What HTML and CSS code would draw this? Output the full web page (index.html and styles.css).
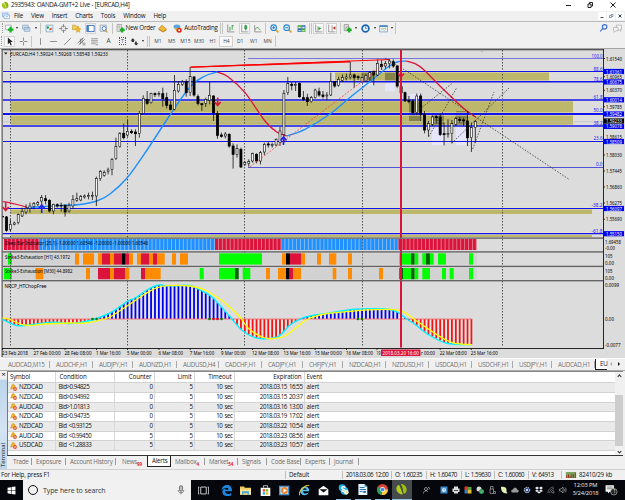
FILE: index.html
```html
<!DOCTYPE html>
<html lang="en">
<head>
    <meta charset="UTF-8">
    <title>2935943: OANDA-GMT+2 Live - [EURCAD,H4]</title>
    <link rel="stylesheet" href="styles.css">
</head>
<body>
    <header class="titlebar">
        <svg class="logo" viewBox="0 0 16 16"><path d="M2 5C4 1 6 2 7 5l4 9C5 16 1 11 2 5z" fill="#a8c71a"/><path d="M6 1c7-2 11 5 8 11l-2 2C9 12 10 6 6 1z" fill="#8fb80f"/></svg>
        <span class="title">2935943: OANDA-GMT+2 Live - [EURCAD,H4]</span>
        <svg class="winctl" viewBox="0 0 60 10" fill="none" stroke="#222"><path d="M5 5.500h5M49.500 2.500l5 5M54.500 2.500l-5 5"/><path d="M27 4h3v3.500h-3zM28.500 4V2.500h3V6H30"/></svg>
    </header>
    <nav class="menubar">
        <svg class="mdi-icon" viewBox="0 0 16 16"><path d="M1 2h11v7H1z" fill="#d6e9fa" stroke="#4a90d0"/><path d="M4 6h11v7H4z" fill="#fff" stroke="#4a90d0"/><path d="M6 11l2-2 2 1 3-3" fill="none" stroke="#4a90d0"/></svg>
        <span>File</span><span>View</span><span>Insert</span><span>Charts</span><span>Tools</span><span>Window</span><span>Help</span>
        <div class="mdi-buttons">
            <svg viewBox="0 0 8 8"><path d="M2.500 5.500h3" stroke="#456" fill="none"/></svg>
            <svg viewBox="0 0 8 8"><path d="M2.500 3.500h2v2h-2zM4 3V2.500h2v2H5" stroke="#678" stroke-width=".7" fill="none"/></svg>
            <svg viewBox="0 0 8 8"><path d="M2.500 2.500l3 3M5.500 2.500l-3 3" stroke="#345" fill="none"/></svg>
        </div>
    </nav>

    <div class="toolbar main-tools">
        <i class="grip"></i>
        <svg viewBox="0 0 16 16"><path d="M1 2h10v8H1z" fill="#fff" stroke="#789"/><path d="M10 5v10M5 10h10" stroke="#16b022" stroke-width="4"/></svg>
        <b class="caret"></b>
        <svg viewBox="0 0 16 16"><path d="M1 2h10v7H1zM4 6h10v7H4z" fill="#cfe2f3" stroke="#6f93b5"/></svg>
        <b class="caret"></b>
        <i class="sep"></i>
        <svg viewBox="0 0 16 16"><path d="M2 2h12v12H2z" fill="#e9f6ff" stroke="#58a"/><path d="M5 4v5M3 6h4" stroke="#1a3" stroke-width="2"/><path d="M8 10l4-2" stroke="#d42" stroke-width="3"/></svg>
        <svg viewBox="0 0 16 16" fill="none" stroke="#555"><circle cx="8" cy="8" r="4.500"/><path d="M8 0v6M8 10v6M0 8h6M10 8h6"/></svg>
        <svg viewBox="0 0 16 16"><path d="M1 2h5l1 2h4v6H1z" fill="#f5cf57" stroke="#b88f20"/><path d="M11 5l1.500 3 3.500.500-2.500 2.500.600 4-3.100-2-3.100 2 .600-4L6 8.500 9.500 8z" fill="#f7bd2b" stroke="#b88f20" stroke-width=".7"/></svg>
        <svg viewBox="0 0 16 16" class="pressed"><path d="M1.500 2.500h13v11h-13z" fill="#fff" stroke="#1f5fae" stroke-width="1.500"/><path d="M2 3h3v10H2z" fill="#2d72c4"/></svg>
        <svg viewBox="0 0 16 16"><path d="M2 2h11v11H2z" fill="#dce9f5" stroke="#789"/><circle cx="9" cy="8" r="3.500" fill="#fff" stroke="#47a" stroke-width="1.500"/><path d="M11 11l4 4" stroke="#d9a62c" stroke-width="2.500"/></svg>
        <i class="sep"></i>
        <svg viewBox="0 0 16 16"><path d="M2 1h8v12H2z" fill="#eee" stroke="#777"/><path d="M4 4h4M4 7h4" stroke="#777"/><path d="M11 6v9M6.500 10.500h9" stroke="#16b022" stroke-width="4"/></svg>
        <span class="label">New Order</span>
        <svg viewBox="0 0 16 16"><path d="M7 2l8 7-6 5-8-5z" fill="#f0b93a" stroke="#a97613"/><path d="M1 9l8 5 6-5v2l-6 4-8-5z" fill="#b37c14"/></svg>
        <svg viewBox="0 0 16 16"><ellipse cx="7" cy="5" rx="6" ry="4" fill="#57a5dc"/><path d="M2 7l5 7 6-7z" fill="#e5b24a"/><circle cx="11" cy="11" r="4.500" fill="#e02a1c"/><path d="M9.500 9.500h3v3h-3z" fill="#fff"/></svg>
        <span class="label">AutoTrading</span>
        <i class="sep double"></i>
        <svg viewBox="0 0 16 16" fill="none" stroke="#555"><path d="M3 1v13h12"/><path d="M7 5v7M11 2v8M11 3h3" stroke="#2a9a3c" stroke-width="1.500"/></svg>
        <svg viewBox="0 0 16 16" fill="none" stroke="#555" class="pressed"><path d="M3 1v13h12"/><path d="M10 1v11" stroke="#2a9a3c"/><path d="M8.500 3h3.500v6H8.500z" fill="#21bf3d" stroke="#167a28"/></svg>
        <svg viewBox="0 0 16 16" fill="none" stroke="#555"><path d="M3 2v12h12"/><path d="M4 10c3-7 6-3 9 1" stroke="#2a9a3c" stroke-width="1.500"/></svg>
        <i class="sep"></i>
        <svg viewBox="0 0 16 16"><path d="M10 10l5 5" stroke="#d9a62c" stroke-width="3"/><circle cx="6.500" cy="6.500" r="5" fill="#d7f0ff" stroke="#2f87c8" stroke-width="2"/><path d="M6.500 4v5M4 6.500h5" stroke="#2468a8" stroke-width="1.500"/></svg>
        <svg viewBox="0 0 16 16"><path d="M10 10l5 5" stroke="#d9a62c" stroke-width="3"/><circle cx="6.500" cy="6.500" r="5" fill="#d7f0ff" stroke="#2f87c8" stroke-width="2"/><path d="M4 6.500h5" stroke="#2468a8" stroke-width="1.500"/></svg>
        <svg viewBox="0 0 16 16"><path d="M1 2h7v6H1zM8 8h7v6H8z" fill="#43a838"/><path d="M8 2h7v6H8zM1 8h7v6H1z" fill="#2d67b7"/><path d="M2.500 5h4v2h-4zM9.500 5h4v2h-4zM2.500 11h4v2h-4zM9.500 11h4v2h-4z" fill="#fff"/></svg>
        <i class="sep double"></i>
        <svg viewBox="0 0 16 16" fill="none" stroke="#555" class="pressed"><path d="M3 1v13h12M7 4v9"/><path d="M8 5l5 3-5 3z" fill="#24a83a" stroke="none"/></svg>
        <svg viewBox="0 0 16 16" fill="none" stroke="#555" class="pressed"><path d="M3 1v13h12M9 2v11"/><path d="M15 4l-5 3 5 3z" fill="#c8291d" stroke="none"/></svg>
        <i class="sep"></i>
        <svg viewBox="0 0 16 16"><path d="M2 1h8v11H2z" fill="#ddd" stroke="#777"/><path d="M4 8l4-4" stroke="#555"/><path d="M11 6v9M6.500 10.500h9" stroke="#16b022" stroke-width="4"/></svg>
        <b class="caret"></b>
        <svg viewBox="0 0 16 16"><circle cx="8" cy="8" r="6" fill="#e6f4ff" stroke="#1e66b4" stroke-width="3"/><path d="M8 4v4h3" fill="none" stroke="#345"/></svg>
        <b class="caret"></b>
        <svg viewBox="0 0 16 16"><path d="M1 3h14v11H1z" fill="#fff" stroke="#2f78ba"/><path d="M1 2.500h14v2.500H1z" fill="#2f78ba"/><path d="M3 8l3-1 3 1 4-1M3 11l3-1 3 1 4-1" fill="none" stroke="#6b9a55"/></svg>
        <b class="caret"></b>
        <i class="sep"></i>
        <span></span>
        <svg viewBox="0 0 16 16" fill="none" stroke="#3c6fd0" stroke-width="2"><circle cx="10" cy="5" r="4"/><path d="M7 8l-5 5"/></svg>
        <svg viewBox="0 0 16 16" fill="#f5f5f5" stroke="#999"><path d="M6 2h9v8h-2l1 3-4-3H6z"/><path d="M1 6h8v6H5l-3 3V12H1z"/></svg>
    </div>

    <div class="toolbar draw-tools">
        <i class="grip"></i>
        <svg viewBox="0 0 16 16" class="pressed"><path d="M5 1v12l3-3 2 5 2-1-2-5h4z" fill="#222"/></svg>
        <svg viewBox="0 0 16 16" stroke="#444"><path d="M8 1v6M8 9v6M1 8h6M9 8h6"/></svg>
        <i class="sep"></i>
        <svg viewBox="0 0 16 16" stroke="#444"><path d="M8 2v12"/></svg>
        <svg viewBox="0 0 16 16" stroke="#444"><path d="M2 8h12"/></svg>
        <svg viewBox="0 0 16 16" stroke="#444"><path d="M2 14L14 2"/></svg>
        <svg viewBox="0 0 16 16" stroke="#444"><path d="M1 11L12 1M3 14L14 4M6 3v10M9 2v9M10 11h5M10 14h5"/></svg>
        <svg viewBox="0 0 16 16" stroke="#666"><path d="M2 3h12M2 6h12M2 9h12M2 12h8M11 12v3M13 12v3"/></svg>
        <span class="big">A</span>
        <span><em>T</em></span>
        <svg viewBox="0 0 16 16" fill="#333"><path d="M5 2l4 4H7v3H3V6H1zM11 15l-4-4h2V8h3v3h3z"/></svg>
        <b class="caret"></b>
        <i class="sep double"></i>
        <span>M1</span><span>M5</span><span>M15</span><span>M30</span><span>H1</span><span class="pressed">H4</span><span>D1</span><span>W1</span><span>MN</span>
        <i class="sep"></i>
    </div>

    <main class="chart">
        <svg id="chart" viewBox="0 48 625 310" width="625" height="310"></svg>
    </main>

    <div class="chart-tabs">
        <span>AUDCAD,M15</span><span>AUDCHF,H1</span><span>AUDJPY,H1</span><span>AUDNZD,H1</span><span>AUDUSD,H4</span><span>CADCHF,H1</span><span>CADJPY,H1</span><span>CHFJPY,H1</span><span>NZDCAD,H1</span><span>NZDUSD,H1</span><span>USDCAD,H1</span><span>USDCHF,H1</span><span>USDJPY,H1</span><span>AUDCAD,H1</span><span class="active">EU</span>
        <div class="arrows"><i></i><i></i></div>
    </div>

    <section class="terminal">
        <aside><span class="close">×</span><span class="name">Terminal</span></aside>
        <div class="panel">
            <div class="list">
                <table>
                    <thead>
                        <tr><th>Symbol</th><th>Condition</th><th>Counter</th><th>Limit</th><th>Timeout</th><th>Expiration</th><th>Event</th></tr>
                    </thead>
                    <tbody id="alerts"></tbody>
                </table>
                <div class="scroll"><i class="up"></i><i class="thumb"></i><i class="down"></i></div>
            </div>
            <div class="panel-tabs">
                <span>Trade</span><span>Exposure</span><span>Account History</span><span>News<sub>99</sub></span><span class="active">Alerts</span><span>Mailbox<sub>4</sub></span><span>Market<sub>54</sub></span><span>Signals</span><span>Code Base</span><span>Experts</span><span>Journal</span>
            </div>
        </div>
    </section>

    <div class="status">
        <span>For Help, press F1</span><span>Default</span><span>2018.03.06 12:00</span><span>O: 1.60235</span><span>H: 1.60470</span><span>L: 1.59630</span><span>C: 1.60060</span><span>V: 64913</span>
        <span class="traffic"><svg viewBox="0 0 24 14"><path d="M0 0h24v14H0z" fill="#7aa35c"/><path d="M1 8h2v6H1zM5 5h2v9H5zM9 9h2v5H9zM13 4h2v10h-2zM17 6h2v8h-2zM21 2h2v12h-2z" fill="#a3261e"/></svg>82410/29 kb</span>
    </div>

    <footer class="taskbar">
        <div class="start"><svg viewBox="0 0 16 16" fill="#fff"><path d="M1 3l6-1v5.500H1zM8 1.900L15 1v6.500H8zM1 8.500h6V14l-6-1zM8 8.500h7V15l-7-.900z"/></svg></div>
        <div class="search">
            <i class="ring"></i><span>Type here to search</span>
            <svg viewBox="0 0 16 16" fill="none" stroke="#444"><rect x="5.500" y="1" width="5" height="9" rx="2.500" fill="#bbb"/><path d="M3.500 8c0 6 9 6 9 0M8 12v3"/></svg>
        </div>
        <div class="apps">
            <div><svg viewBox="0 0 16 16" fill="none" stroke="#ddd" stroke-width="1.300"><path d="M4 3h8v10H4zM2 3H.500v10H2M14 3h1.500v10H14"/></svg></div>
            <div><svg viewBox="0 0 16 16"><path d="M1 8C1 2 5 0 9 0c5 0 7 4 7 9H6c0 4 5 5 9 3v3C8 18 2 15 2 10c0-3 2-5 5-5 0 0-4-1-6 3zM6 7h5c0-4-5-4-5 0z" fill="#1f86e0" fill-rule="evenodd"/></svg></div>
            <div><svg viewBox="0 0 16 16"><path d="M0 2h6l1 2h9v10H0z" fill="#f3cb58"/><path d="M0 6h16v8H0z" fill="#fce08a"/><path d="M3 9h10v5h-2v-2H5v2H3z" fill="#4aa5dc"/></svg></div>
            <div><svg viewBox="0 0 16 16"><path d="M1 4h14v12H1z" fill="#fff"/><path d="M5 4V1h6v3" fill="none" stroke="#fff"/><path d="M4 6h3.500v3.500H4z" fill="#e5502a"/><path d="M8.500 6H12v3.500H8.500z" fill="#7cba28"/><path d="M4 10.500h3.500V14H4z" fill="#2ba4e2"/><path d="M8.500 10.500H12V14H8.500z" fill="#f6b91a"/></svg></div>
            <div><svg viewBox="0 0 16 16"><path d="M0 1h15v14H0z" fill="#4b90ca"/><path d="M2 3h11v10H2z" fill="#cfe2f0"/><circle cx="8" cy="8" r="5" fill="#ee8427"/><path d="M6.500 5l5 3-5 3z" fill="#fff"/></svg></div>
            <div><svg viewBox="0 0 16 16"><path d="M2 9c0-5 4-7 7-7 4 0 6 3 6 7H6c0 4 4 4 8 2-1 3-4 4-6 4-4 0-6-3-6-6zm4-2h5c0-3-5-3-5 0z" fill="#52c3f2" fill-rule="evenodd"/><path d="M1 15C-2 9 11-2 15 1" fill="none" stroke="#f3c62e" stroke-width="1.500"/></svg></div>
            <div><svg viewBox="0 0 16 16"><path d="M1 6l7-5 7 5v9H1z" fill="#fff"/><path d="M2 6h12L8 11z" fill="#111"/></svg></div>
            <div class="open"><svg viewBox="0 0 16 16"><circle cx="6" cy="5.500" r="5" fill="#1bb0ee"/><circle cx="9.500" cy="10" r="5.500" fill="#1bb0ee"/><path d="M11 5c-6-3-7 2-3 3s2 4-3 2" fill="none" stroke="#fff" stroke-width="2"/><circle cx="12" cy="12" r="3.500" fill="#e8f2c8"/></svg></div>
            <div class="open"><svg viewBox="0 0 16 16"><path d="M2 0h9l4 4v12H2z" fill="#e9f3fb"/><path d="M11 0l4 4h-4z" fill="#3f8fd0"/><path d="M4 5h7M4 8h9M4 11h4" stroke="#2b75b5" stroke-width="1.500"/><path d="M9 10h4v3H9z" fill="#2b75b5"/></svg></div>
            <div class="open"><svg viewBox="0 0 16 16"><circle cx="8" cy="8" r="8" fill="#dc4437"/><path d="M8 8L1 4a8 8 0 0 0 6 12z" fill="#25a05a"/><path d="M8 8h8a8 8 0 0 1-9 8z" fill="#fdcf43"/><circle cx="8" cy="8" r="3.500" fill="#fff"/><circle cx="8" cy="8" r="2.700" fill="#4286f3"/></svg></div>
            <div class="open current"><svg viewBox="0 0 16 16"><path d="M1 4C2 2 4 1 5 2l5 13C4 16-1 10 1 4z" fill="#b3cc16"/><path d="M7 0c7 0 11 7 7 13l-3 1C10 9 10 5 7 0z" fill="#9dbd10"/></svg></div>
        </div>
        <div class="tray">
            <svg viewBox="0 0 16 16" fill="none" stroke="#ccc" stroke-width="1.300"><circle cx="6" cy="6" r="3"/><path d="M1 15c0-6 6-7 9-3M10 3a2 2 0 1 1 2 4"/></svg>
            <svg viewBox="0 0 16 16"><path d="M1 1h14v14H1z" fill="#3f8bd0"/><circle cx="8" cy="8" r="4" fill="#e2f0fb"/><path d="M8 5v3h2" stroke="#27609a" fill="none"/></svg>
            <svg viewBox="0 0 16 16"><path d="M4 1h8v4H4zM1 5h14v7H1zM4 9h8v6H4z" fill="#ddd"/><path d="M4 8h8v1.500H4z" fill="#222"/></svg>
            <svg viewBox="0 0 16 16"><path d="M1 1h7v7H1z" fill="#d63b2b"/><path d="M8 2h7v6H8z" fill="#59a640"/><path d="M1 8h7v7H1z" fill="#397dc4"/><path d="M8 8h7v7H8z" fill="#eab927"/></svg>
            <svg viewBox="0 0 16 16"><circle cx="6" cy="6" r="5" fill="#ddd"/><circle cx="11" cy="11" r="5" fill="#259d54"/><path d="M8.500 11l2 2 3-4" stroke="#fff" fill="none"/></svg>
            <svg viewBox="0 0 16 16" fill="none" stroke="#ddd"><path d="M4 6h7v9H4zM5 6V1h5v5M11 11h4v4h-4"/></svg>
            <svg viewBox="0 0 16 16"><path d="M2 2c6-1 9 0 11 4v6l2 2-2 1C6 14 2 11 2 2z" fill="#dff0b4"/></svg>
            <svg viewBox="0 0 16 16"><path d="M1 12c-2-4 2-5 3-5 1-5 8-5 8 0 4 0 5 5 1 6H2z" fill="#999"/></svg>
            <svg viewBox="0 0 16 16"><circle cx="8" cy="8" r="5.500" fill="#2d4f86" stroke="#ddd" stroke-dasharray="3 1.500" stroke-width="2"/><circle cx="8" cy="8" r="2" fill="#fff"/></svg>
            <svg viewBox="0 0 16 16" fill="#eee"><path d="M4 1l4 3-4 3-4-3zM12 1l4 3-4 3-4-3zM4 7l4 3-4 2-4-2zM12 7l4 3-4 2-4-2zM8 11l4 2-4 2-4-2z"/></svg>
            <svg viewBox="0 0 16 16" fill="none" stroke="#aaa"><path d="M2 14C2 7 7 2 14 2M5 14c0-5 4-9 9-9M8 14c0-3 3-6 6-6M11 14c0-2 1-3 3-3v3z"/></svg>
            <svg viewBox="0 0 16 16" fill="none" stroke="#ddd"><path d="M1 6h3l4-4v12l-4-4H1zM10 5c2 2 2 4 0 6M12 3c3 3 3 7 0 10"/></svg>
        </div>
        <div class="clock"><span>12:03 PM</span><span>3/24/2018</span></div>
        <div class="notify"><svg viewBox="0 0 22 20"><path d="M1 2h14v11H8l-3 3v-3H1z" fill="#fff"/><path d="M3 5h10M3 8h10" stroke="#222"/><circle cx="15" cy="13" r="5.500" fill="#222" stroke="#ccc"/></svg><span>1</span></div>
    </footer>

    <script src="chart.js"></script>
</body>
</html>
```
FILE: styles.css
```css
* {
    box-sizing: border-box;
}

body {
    margin: 0;
    width: 625px;
    height: 500px;
    overflow: hidden;
    background: #f0f0f0;
    color: #111;
    font-family: "Open Sans", "Noto Sans", sans-serif;
    font-size: 6.2px;
    line-height: 1;
    display: flex;
    flex-direction: column;
}

svg {
    display: block;
    flex: none;
}

/* title + menu */
.titlebar {
    height: 11px;
    background: #fff;
    display: flex;
    align-items: center;
    padding-left: 1px;
}

.logo {
    width: 8px;
    height: 9px;
    margin-right: 2px;
}

.title {
    font-size: 6.2px;
    letter-spacing: -0.28px;
    word-spacing: 0.3px;
}

.winctl {
    width: 60px;
    height: 10px;
    margin-left: auto;
    margin-right: 4px;
}

.menubar {
    height: 11px;
    display: flex;
    align-items: center;
    padding-left: 2px;
    border-bottom: 1px solid #bbb;
}

.menubar span {
    margin-right: 8px;
    letter-spacing: -0.2px;
}

.mdi-icon {
    width: 8px;
    height: 8px;
    margin-right: 4px;
}

.mdi-buttons {
    margin-left: auto;
    display: flex;
    gap: 1px;
    padding-right: 1px;
}

.mdi-buttons svg {
    width: 8px;
    height: 8px;
    background: #fff;
}

/* toolbars */
.toolbar {
    display: grid;
    align-items: center;
    justify-items: center;
    height: 13px;
}

.toolbar svg {
    width: 9px;
    height: 9px;
}

.main-tools {
    grid-template-columns: 4px 10px 6px 13px 5px 4px 14px 14px 13px 14px 13px 4px 12px 29px 15px 14px 34px 6px 13px 14px 13px 3px 14px 13px 14px 4px 12px 15px 3px 11px 5px 14px 5px 13px 4px 2px 1fr 14px 15px;
}

.draw-tools {
    grid-template-columns: 3px repeat(2, 13.7px) 3px repeat(7, 13.7px) 11px 6px 5px repeat(9, 13.7px) 3px;
    font-size: 5px;
    color: #444;
}

.toolbar .pressed {
    background: #fafafa;
    outline: 1px solid #d2d2d2;
}

span.pressed {
    width: 12px;
    padding: 2px 0;
    text-align: center;
}

.draw-tools em {
    font-style: normal;
    border: 1px dotted #555;
    padding: 0 1px;
}

.draw-tools .big {
    font-size: 6.5px;
}

.label {
    font-size: 6.2px;
    white-space: nowrap;
    letter-spacing: -0.2px;
}

.caret {
    border: 1.500px solid transparent;
    border-top: 2px solid #222;
    border-bottom: 0;
}

.grip {
    width: 1px;
    height: 10px;
    border-left: 1px dotted #999;
}

.sep {
    width: 1px;
    height: 11px;
    background: #c4c4c4;
}

.double {
    width: 3px;
    background: none;
    border-left: 1px solid #c4c4c4;
    border-right: 1px solid #c4c4c4;
}

.chart {
    height: 310px;
    background: #dcdcdc;
}

.chart text {
    font-family: "Noto Sans", sans-serif;
    font-size: 5.6px;
}

/* chart tabs */
.chart-tabs {
    height: 13px;
    display: grid;
    grid-template-columns: 50px 43px 40px 44px 42px 43px 41px 40px 43px 43px 43px 41px 39px 43px 12px 1fr;
    align-items: center;
    border-top: 1px solid #fff;
    border-bottom: 1px solid #aaa;
    color: #707070;
    font-size: 6.2px;
    letter-spacing: -0.3px;
}

.chart-tabs > span {
    padding-left: 6px;
    border-right: 1px solid #aaa;
    line-height: 7px;
    white-space: nowrap;
}

.chart-tabs > span:first-child {
    padding-left: 8px;
}

.chart-tabs .active {
    background: #fff;
    color: #111;
    border: 1px solid #222;
    border-width: 0 0 1px 1px;
    line-height: 10px;
    padding-left: 4px;
}

.arrows {
    display: flex;
    gap: 6px;
    padding-left: 1px;
}

.arrows i {
    border: 2px solid transparent;
    border-right-color: #aaa;
}

.arrows i + i {
    border-color: transparent transparent transparent #111;
}

/* terminal */
.terminal {
    height: 99px;
    display: flex;
}

.terminal aside {
    width: 8px;
    background: linear-gradient(#f0f0f0 8px, #bcd4ea 9px, #d4e4f3 60px, #bcd4ea);
    display: flex;
    flex-direction: column;
    justify-content: space-between;
    align-items: center;
    padding-bottom: 2px;
}

.close {
    font-size: 8px;
    line-height: 6px;
}

.name {
    writing-mode: vertical-rl;
    transform: rotate(180deg);
    font-size: 5.8px;
}

.panel {
    flex: 1;
    margin-right: 2px;
}

.list {
    height: 85px;
    display: flex;
    background: #fff;
    border-left: 1px solid #777;
    border-bottom: 1px solid #333;
    border-top: 1px solid #888;
}

table {
    width: 607px;
    height: 79px;
    border-collapse: collapse;
    table-layout: fixed;
}

th, td {
    padding: 0 1px 0 3px;
    text-align: right;
    font-weight: normal;
    height: 9.700px;
    line-height: 8.700px;
    border-bottom: 1px solid #d2d2d2;
    border-right: 1px solid #d8d8d8;
    white-space: nowrap;
    letter-spacing: -0.45px;
    word-spacing: 0.9px;
}

th {
    height: 11px;
    padding-right: 2px;
    letter-spacing: -0.1px;
}

th:nth-child(1), td:nth-child(1) {
    width: 47px;
    text-align: left;
    padding-left: 2px;
    letter-spacing: -0.2px;
}

th:nth-child(2), td:nth-child(2) {
    width: 59px;
    text-align: left;
}

th:nth-child(2) {
    padding-left: 4px;
}

th:nth-child(3), th:nth-child(4), th:nth-child(5) {
    width: 40px;
}

th:nth-child(6) {
    width: 70px;
}

th:nth-child(7), td:nth-child(7) {
    text-align: left;
    padding-left: 2px;
    border-right: 0;
    letter-spacing: -0.1px;
}

tbody tr:nth-child(odd) {
    background: #eaeaea;
}

td svg {
    display: inline-block;
    width: 7px;
    height: 7px;
    vertical-align: -1.500px;
    margin-right: 2px;
}

.scroll {
    width: 8px;
    background: #f0f0f0;
    display: flex;
    flex-direction: column;
    align-items: center;
    padding: 3px 0 2px;
}

.scroll .thumb {
    width: 8px;
    height: 53px;
    margin: 17px 0 4px;
    background: #cdcdcd;
}

.up, .down {
    width: 3px;
    height: 3px;
    border: 1px solid #333;
    border-width: 1px 0 0 1px;
    transform: rotate(45deg);
}

.down {
    transform: rotate(225deg);
}

.panel-tabs {
    display: grid;
    grid-template-columns: 25px 34px 50px 31px 24px 34px 33px 29px 34px 29px 29px;
    color: #6c6c6c;
    height: 11px;
    align-items: center;
    letter-spacing: -0.2px;
}

.panel-tabs span {
    border-right: 1px solid #999;
    padding-left: 4px;
    line-height: 7px;
    height: 7px;
    white-space: nowrap;
}

.panel-tabs span:first-child {
    padding-left: 6px;
}

.panel-tabs .active {
    background: #fff;
    color: #111;
    border: 1px solid #222;
    border-top: 0;
    height: 11px;
    line-height: 10px;
}

.panel-tabs span:nth-child(4) {
    border-right: 0;
    padding-left: 6px;
}

.panel-tabs sub {
    color: #e8202a;
    font-size: 4.5px;
    font-weight: bold;
    line-height: 0;
    vertical-align: -2px;
}

/* status bar */
.status {
    height: 11px;
    border-top: 1px solid #d0d0d0;
    display: grid;
    grid-template-columns: 286px 57px 49px 35px 35px 33px 34px 33px 1fr;
    align-items: center;
    padding-bottom: 1px;
    letter-spacing: -0.45px;
    word-spacing: 0.7px;
}

.status span {
    border-right: 1px solid #c0c0c0;
    line-height: 8px;
    padding-left: 3px;
    white-space: nowrap;
}

.status span:nth-child(-n+2) {
    letter-spacing: -0.15px;
    word-spacing: 0;
}

.status span:first-child {
    padding-left: 1px;
}

.status .traffic {
    display: flex;
    align-items: center;
    gap: 2px;
    border: 0;
    letter-spacing: -0.3px;
}

.traffic svg {
    width: 12px;
    height: 6px;
}

/* windows taskbar */
.taskbar {
    height: 20px;
    background: #05070d;
    display: flex;
    color: #eee;
}

.start {
    width: 23px;
    display: grid;
    place-items: center;
}

.start svg {
    width: 9px;
    height: 9px;
}

.search {
    width: 168px;
    background: #f1f1f1;
    color: #333;
    display: flex;
    align-items: center;
    padding: 0 5px;
    font-size: 7px;
    letter-spacing: -0.1px;
}

.ring {
    width: 10px;
    height: 10px;
    border: 1.500px solid #111;
    border-radius: 50%;
    margin-right: 5px;
}

.search svg {
    width: 10px;
    height: 10px;
    margin-left: auto;
}

.apps {
    display: grid;
    grid-template-columns: 25px 20px repeat(9, 19.500px);
}

.apps div {
    display: grid;
    place-items: center;
}

.apps svg {
    width: 11px;
    height: 11px;
}

.apps .open {
    margin: 0 2px;
    border-bottom: 1px solid #8ec5ec;
}

.apps .current {
    margin: 0;
    background: #454a4d;
}

.tray {
    display: grid;
    grid-template-columns: 22px 13px repeat(10, 11.800px);
    padding-left: 4px;
    place-items: center;
}

.tray svg {
    width: 8px;
    height: 8px;
}

.clock {
    display: flex;
    flex-direction: column;
    justify-content: space-evenly;
    align-items: center;
    width: 34px;
    font-size: 5.8px;
    letter-spacing: -0.15px;
}

.notify {
    display: flex;
    align-items: center;
    margin-left: 3px;
    position: relative;
}

.notify svg {
    width: 13px;
    height: 12px;
}

.notify span {
    position: absolute;
    left: 7.500px;
    top: 9px;
    font-size: 5px;
}
```
FILE: chart.js
```javascript
const svg = document.getElementById('chart');
const NS = 'http://www.w3.org/2000/svg';

function add(tag, attrs, text) {
    const el = document.createElementNS(NS, tag);
    for (const k in attrs) el.setAttribute(k, attrs[k]);
    if (text) el.textContent = text;
    svg.appendChild(el);
    return el;
}

function rect(x, y, w, h, fill, opacity = 1) {
    add('rect', { x, y, width: w, height: h, fill, opacity });
}

function line(x1, y1, x2, y2, stroke, width = 1, dash = '') {
    add('line', { x1, y1, x2, y2, stroke, 'stroke-width': width, 'stroke-dasharray': dash });
}

// smooth curve through the points
function curve(points, stroke, width) {
    let d = `M${points[0]}`;
    for (let i = 0; i < points.length - 1; i++) {
        const p0 = points[i - 1] || points[i], p1 = points[i], p2 = points[i + 1], p3 = points[i + 2] || p2;
        d += `C${p1[0] + (p2[0] - p0[0]) / 6} ${p1[1] + (p2[1] - p0[1]) / 6} ${p2[0] - (p3[0] - p1[0]) / 6} ${p2[1] - (p3[1] - p1[1]) / 6} ${p2[0]} ${p2[1]}`;
    }
    add('path', { d, fill: 'none', stroke, 'stroke-width': width });
}

function label(x, y, text, w, fill = '#000') {
    add('text', { x, y, fill, textLength: w, lengthAdjust: 'spacingAndGlyphs' }, text);
}

const BLUE = '#1212f4', OLIVE = '#bdb76b', SKY = '#1e90ff', RED = '#dc143c';
const STEP = 3.907;
const barX = i => 6.5 + STEP * i;

// frame
rect(0, 48, 625, 310, '#dcdcdc');
rect(0, 48, 1.5, 310, '#f0f0f0');
rect(0, 48, 625, 1, '#a5a5a5');
rect(1.5, 49, 602, 1.3, '#555');
rect(1.5, 49, 1.3, 308, '#666');

// supply / demand zones
rect(10.5, 100, 562.5, 26, OLIVE);
rect(335, 72, 214, 9.5, OLIVE);
rect(10.5, 209, 581.5, 5, OLIVE);
rect(10.5, 234.5, 581.5, 2.5, OLIVE);
[[385, 81.5, 10, 9.5], [410, 94, 10, 7], [432, 126, 12, 19], [456, 126, 10, 19], [361.5, 81.5, 12, 4]]
    .forEach(r => rect(...r, '#e6e6fa'));
[[361.5, 72, 12, 9.5], [385, 72, 10, 10], [409, 101, 11, 20], [432, 113, 12, 13], [456, 111, 12, 15]]
    .forEach(r => rect(...r, '#85854a'));

// session separators
[10.5, 127.5, 244.5, 362.5, 502.5].forEach(x => line(x, 50, x, 347, '#444', 0.9, '1.5 1.5'));

// levels
line(3, 121.7, 603, 121.7, '#c0c0c0', 0.6);
[[71.5, 1], [81.8, 1.4], [100, 1.4], [114, 2], [126, 1.4], [141.5, 1], [208.5, 1], [233.6, 1.2]].forEach(([y, w]) => {
    line(3, y, 603, y, '#e9e6c4', w + 1);
    line(3, y, 603, y, BLUE, w);
});
line(248, 58.5, 603, 58.5, '#4a4ae0', 0.7);
line(248, 167.5, 603, 167.5, '#3030d8', 0.8);

// moving average
curve([[2.5, 201.5], [15, 204], [28, 207.5]], RED, 1.2);
curve([[28, 207.5], [45, 206.5], [65, 205.2], [80, 204.5], [98, 200.5], [110, 194], [127, 178], [147, 150], [170, 115], [190, 87], [205, 76], [217, 72]], SKY, 1.4);
curve([[217, 72], [228, 76.7], [245, 92.7], [265, 121], [276.7, 132], [286.7, 136]], RED, 1.3);
curve([[286.7, 136], [305, 129.3], [330, 114], [351.7, 96], [371.7, 80.3], [388, 67], [397, 62], [406, 61]], SKY, 1.4);
curve([[406, 61], [415, 63.7], [423, 69], [443, 89], [463, 107.7], [475.5, 117]], RED, 1.3);

// candles: high, body top, body bottom, low (thirds of a pixel), d = down bar
const candles = [
    '510 513 553 557 d', '520 535 550 557', '527 531 535 538', '503 506 530 535', '485 496 510 513', '475 487 498 505',
    '470 480 487 500', '468 473 482 490', '465 470 476 480', '447 455 465 480', '447 458 464 475 d', '460 463 495 500 d',
    '473 475 495 505', '472 476 480 485 d', '470 478 480 497 d', '475 478 498 512 d', '470 478 495 500', '447 460 480 488',
    '440 457 463 468', '447 452 462 466', '445 450 453 458', '440 449 452 460', '437 449 452 462', '392 397 450 480',
    '372 377 398 405', '373 380 388 392', '365 372 377 385', '336 340 370 388', '275 302 338 342', '258 262 302 305',
    '233 262 275 280 d', '222 256 267 272', '250 256 260 264 d', '250 258 263 300 d', '195 202 262 275', '148 157 202 205',
    '135 160 172 176 d', '140 142 170 173', '139 143 146 153 d', '136 143 146 152', '125 143 158 182 d', '140 155 178 187 d',
    '165 177 190 193 d', '87 133 190 193', '105 115 135 140', '102 108 115 120', '100 107 140 152 d', '63 92 140 150',
    '90 93 147 152 d', '145 152 172 178 d', '172 173 176 195 d', '155 160 172 183', '108 148 163 175', '148 150 200 225 d',
    '195 202 268 278 d', '260 267 271 275 d', '258 264 270 277', '262 265 300 305 d', '292 300 325 368 d', '295 308 325 335',
    '305 310 363 366 d', '345 350 355 360', '340 347 352 362', '320 323 345 350', '322 325 345 352 d', '315 320 345 355',
    '290 295 318 327', '288 294 297 305 d', '290 295 298 305', '277 280 297 300', '243 255 290 300', '132 142 265 290',
    '93 113 140 147', '108 115 118 133 d', '108 115 118 135', '110 112 152 155 d', '135 155 160 165 d', '143 155 167 180 d',
    '150 155 167 170', '128 132 155 158', '125 137 147 152 d', '135 147 151 158 d', '138 147 150 163', '80 107 147 150',
    '105 107 120 125 d', '92 100 118 122', '85 95 103 108', '83 93 98 103', '48 87 93 100', '83 87 95 125 d',
    '88 92 95 102 d', '93 95 107 110', '85 88 105 108', '75 80 95 105', '73 77 87 118 d', '40 53 87 90',
    '42 55 62 72 d', '45 53 60 68', '40 45 53 67', '40 47 60 65 d', '58 60 120 125 d', '118 122 140 145 d',
    '137 140 165 167 d', '150 163 167 172 d', '160 165 200 207 d', '143 150 200 207', '143 150 205 225 d', '195 205 252 262 d',
    '225 233 252 272', '208 213 235 240', '207 212 215 232 d', '203 213 265 270 d', '230 263 266 298 d', '220 262 266 275',
    '222 233 263 292', '212 218 235 240', '213 220 223 230 d', '215 222 225 240 d', '195 225 275 300 d', '230 245 275 318',
    '222 227 245 290'
];
const py = v => 46 + v / 3;
rect(2.5, 216, 1.5, 1.3, '#000');
candles.forEach((c, i) => {
    const [high, top, bottom, low, down] = c.split(' ');
    const x = barX(i);
    line(x, py(high), x, py(low), '#111', 0.8);
    add('rect', {
        x: x - 1, y: py(top), width: 2, height: Math.max(0.6, (bottom - top) / 3),
        fill: down ? '#000' : '#f4f4f4', stroke: '#000', 'stroke-width': down ? 0.8 : 0.55
    });
});

// trend lines and projections
add('path', { d: 'M190.5 66.500L350 60.800V62.500L190.500 67.800z', fill: '#f00' });
line(190.5, 67.2, 390, 59.5, '#f00', 1.1);
line(250, 166.7, 385, 64, '#f03030', 0.7, '2 1.5');
line(385, 58, 410, 73.3, '#333', 0.7, '1.5 1.5');
[[410, 73.3, 568.5, 179], [428.7, 136.7, 456.7, 87.7], [420, 109, 451.7, 83.7], [451.7, 143.3, 509, 88], [472.7, 149, 494, 92]]
    .forEach(l => line(...l, '#333', 0.8, '1.5 1.5'));

rect(400, 50, 2, 297, RED);

function arrow(x, y, dir, color) {
    add('path', { d: `M${x} ${y}v${8 * dir}M${x - 3} ${y + 4.5 * dir}l3 ${3.5 * dir}l3 ${-3.5 * dir}`, fill: 'none', stroke: color, 'stroke-width': 1.6 });
}
arrow(5.7, 202.5, 1, RED);
arrow(217.7, 97.5, 1, RED);
arrow(401, 69, 1, RED);
arrow(41.7, 213, -1, '#2222f0');
arrow(283.5, 145, -1, '#2222f0');

add('path', { d: 'M4 52.500h3.500l-1.700 2z', fill: '#111' });
label(10, 55.5, 'EURCAD,H4  1.59024 1.59268 1.58548 1.59233', 98);
add('path', { d: 'M480 50.500h4l-2 2z', fill: '#b5b5b5' });

// trend bars
rect(3, 238.5, 474, 12, '#d3d3d3');
for (let x = 4; x < 474; x += STEP) {
    const red = x < 38 || (x > 214 && x < 281) || x > 398;
    rect(x, 239, STEP, 11, red ? '#e0788c' : '#84bdf2');
    rect(x, 239, 3, 11, red ? RED : SKY);
}

// exhaustion strips
const palette = { g: '#0f0', d: '#006400', o: '#ff8c00', c: RED, k: '#000' };
const h1 = 'g8-12 o75-79 o83-94 o98-102 c102-110 o110-114 c114-122 k122-125.7 c125.7-129.3 o129.3-133 o137-141 c141-149 o149-153 c153-157 o157-164.7 o172-176 o180-188 g219-262 o282-286 k286-290 c290-301 o301-305 o317-321 o329-336.3 o348-352 g399.3-411 d411-414.7 g414.7-418.3 g422.3-426 d426-430 g430-433.7 g438-446 g469-473';
const m30 = 'g4-12 o35.7-43.3 o86-90 c98-110 o110-114 c114-125.3 o125.3-129.3 c141-145 o145-160.7 g199.7-203.7 g219-235 d235-238.7 g242.7-250.3 o266-270 o278-286 k286-289.7 c289.7-293.3 o293.3-301 o332.7-336.3 o348-352 o379-383 d399.3-403 g403-411 d411-414.7 g414.7-418.3 g422.3-430 g442-446 g449.7-453.7 g469-473';
[[h1, 253.3], [m30, 268]].forEach(([data, y]) => {
    rect(3, y, 474, 11.3, '#d2d2d2');
    data.split(' ').forEach(s => {
        const [a, b] = s.slice(1).split('-').map(Number);
        rect(a, y, b - a, 11.3, palette[s[0]]);
    });
});
line(10.5, 253, 10.5, 280, '#444', 0.9, '1.5 1.5');
line(362.5, 239, 362.5, 280, '#555', 0.8, '1.5 1.5');
rect(400, 239, 2, 108, RED);

[237.4, 251.2, 265.7, 280].forEach(y => rect(2, y, 601, 1.4, '#666'));

label(5, 244.8, 'Deep Bar Indicator (25,1) -1.00000 1.60546 -1.00000 -1.00000 1.60546', 143);
label(5, 258.7, 'Strike3-Exhaustion [H1] 43.1972', 65);
label(5, 273.3, 'Strike3-Exhaustion [M30] 44.8982', 67.5);
label(4.5, 287.5, 'NRCP_HTChopFree', 42);

// histogram
const fast = [[2.5, 319.5], [10, 323], [16, 325.5], [25, 325.5], [40, 323.5], [55, 322.3], [70, 323.5], [80, 322.5], [90, 320.5], [98, 318], [110, 313], [118, 308], [128, 301], [136, 297.5], [147, 290], [155, 286], [161, 284.7], [165, 285.7], [175, 285.7], [190, 285.5], [200, 290], [211.7, 296.7], [230, 316.7], [241.7, 330], [255, 337.7], [265, 338.7], [278, 336.7], [290, 325], [301.7, 318.3], [315, 315], [331.7, 312.7], [355, 309.3], [385, 309], [396.7, 311.7], [406.7, 319], [415, 324.3], [428, 334.3], [446.7, 343.3], [472, 344.7]];
const slow = [[2.5, 318], [10, 319.5], [20, 324], [30, 325.5], [45, 324], [70, 323], [85, 323], [105, 319], [115, 314], [130, 304], [145, 294], [155, 288.5], [167, 285.7], [190, 286], [205, 290], [212, 294], [225, 303], [240, 317], [248, 328], [262, 337], [272, 338.7], [285, 336], [297, 327], [308, 319], [325, 314], [350, 311.3], [375, 309.7], [395, 309.7], [405, 312.7], [415, 319.7], [430, 330], [445, 339.5], [455, 343.3], [472, 344.7]];

function valueAt(points, x) {
    const i = points.findIndex(p => p[0] >= x);
    if (i < 1) return points[0][1];
    const [a, b] = [points[i - 1], points[i]];
    return a[1] + (b[1] - a[1]) * (x - a[0]) / (b[0] - a[0]);
}

for (let i = 0; barX(i) < 472; i++) {
    const x = barX(i), y = valueAt(fast, x), up = y < 319;
    rect(x - 2, Math.min(y, 319), STEP, Math.abs(y - 319), '#e6e6e6');
    rect(x - 0.9, Math.min(y, 319), 1.8, Math.abs(y - 319), up ? '#0000f0' : '#f01414');
}
line(3, 319, 472, 319, '#ff6a6a', 0.9);
curve(fast, '#00f0ff', 1.4);
curve(slow, '#ff0', 1.3);
[[92.5, 'g'], [96.5, 'g'], [209.5, 'g'], [213.5, 'r'], [217.5, 'r'], [221.5, 'g'], [358, 'g'], [362, 'g']]
    .forEach(([cx, c]) => add('circle', { cx, cy: 319, r: 1.3, fill: c === 'g' ? '#008000' : '#e00020' }));
rect(400, 281.5, 2, 66, RED);

// axes
rect(603, 49, 0.9, 299.5, '#111');
rect(2, 348, 602, 0.9, '#111');
[[2, '23 Feb 2018', 26], [33.5, '27 Feb 00:00', 27], [64.5, '28 Feb 08:00', 27], [96, '1 Mar 16:00', 24.5], [127, '5 Mar 00:00', 24.5],
 [158.5, '6 Mar 08:00', 24.5], [189.7, '7 Mar 16:00', 24.5], [221, '9 Mar 00:00', 24.5], [252, '12 Mar 08:00', 27],
 [283.5, '13 Mar 16:00', 27], [314.7, '15 Mar 00:00', 27], [346, '16 Mar 08:00', 27], [376.5, '19', 4],
 [421, 'r 00:00', 14], [439.7, '22 Mar 08:00', 27], [470.8, '23 Mar 16:00', 27]].forEach(([x, t, w]) => {
    if (t !== 'r 00:00') line(x + 0.5, 348, x + 0.5, 350, '#111', 0.8);
    label(x, 355, t, w);
});
rect(381, 349.5, 39.5, 6.5, RED);
label(382.5, 355, '2018.03.20 16:00', 36.5, '#fff');

[[58.5, '1.61540'], [76.6, '1.60965'], [90.3, '1.60370'], [106.7, '1.59785'], [155, '1.58030'], [171, '1.57445'],
 [187, '1.56860'], [203, '1.56275'], [219.3, '1.55690']].forEach(([y, t]) => {
    line(603, y, 605, y, '#111', 0.8);
    label(606, y + 2, t, 16);
});
label(606, 138.5, '1.58615', 16);
[[71.5, '1.61061'], [81.9, '1.60675'], [99.8, '1.60014'], [114, '1.59482'], [126.4, '1.59078'], [141.5, '1.58509'], [208.5, '1.56097'], [233.7, '1.55150'], [121, '1.59233']].forEach(([y, t]) => {
    rect(604, y - 2.6, 20, 5.2, t === '1.59233' ? '#000' : '#0000f0');
    label(606, y + 2, t, 16, '#fff');
});
[[243.5, '1.69458', 16], [250, '-0.00', 10], [258, '105', 7.5], [264.8, '0.00', 9], [272.5, '105', 7.5], [279.5, '0.00', 9], [287, '0.0099', 14], [321, '0.00', 9], [347, '-0.0077', 15.5]]
    .forEach(([y, t, w]) => label(605, y, t, w));

// fibo levels
[[58, '100.0'], [70.5, '88.6'], [80.7, '78.6'], [99.3, '61.8'], [111.8, '50.0'], [125, '38.2'], [139.8, '23.6'], [166, '0.0'], [207, '-38.2'], [232.5, '-61.8']]
    .forEach(([y, t]) => {
        const w = { 3: 6.5, 4: 9, 5: 11 }[t.length];
        label(602.5 - w, y, t, w, '#2020f0');
    });

// alerts table
const alerts = [
    ['NZDCAD', 'Bid>0.94825', 0, '2018.03.15 16:55'],
    ['NZDCAD', 'Bid>0.94992', 0, '2018.03.15 20:37'],
    ['AUDCAD', 'Bid>1.01813', 0, '2018.03.16 13:00'],
    ['NZDCAD', 'Bid>0.94735', 0, '2018.03.19 17:02'],
    ['NZDCAD', 'Bid <0.93125', 0, '2018.03.22 10:54'],
    ['AUDCAD', 'Bid <0.99450', 5, '2018.03.23 08:56'],
    ['USDCAD', 'Bid <1.28833', 5, '2018.03.23 10:57']
];
const bell = '<svg viewBox="0 0 14 14"><path d="M1 10c3-3 1-8 5-9 4 0 4 5 6 8z" fill="#f0b92c" stroke="#a87a14" stroke-width=".8"/><circle cx="10" cy="10" r="3.800" fill="#e2502e"/><path d="M8 10h4" stroke="#fff" stroke-width="1.500"/></svg>';
document.getElementById('alerts').innerHTML = alerts.map(([symbol, cond, count, exp]) =>
    `<tr><td>${bell}${symbol}</td><td>${cond.replace('<', '&lt;')}</td><td>${count}</td><td>5</td><td>10 sec</td><td>${exp}</td><td>alert</td></tr>`
).join('');
```
